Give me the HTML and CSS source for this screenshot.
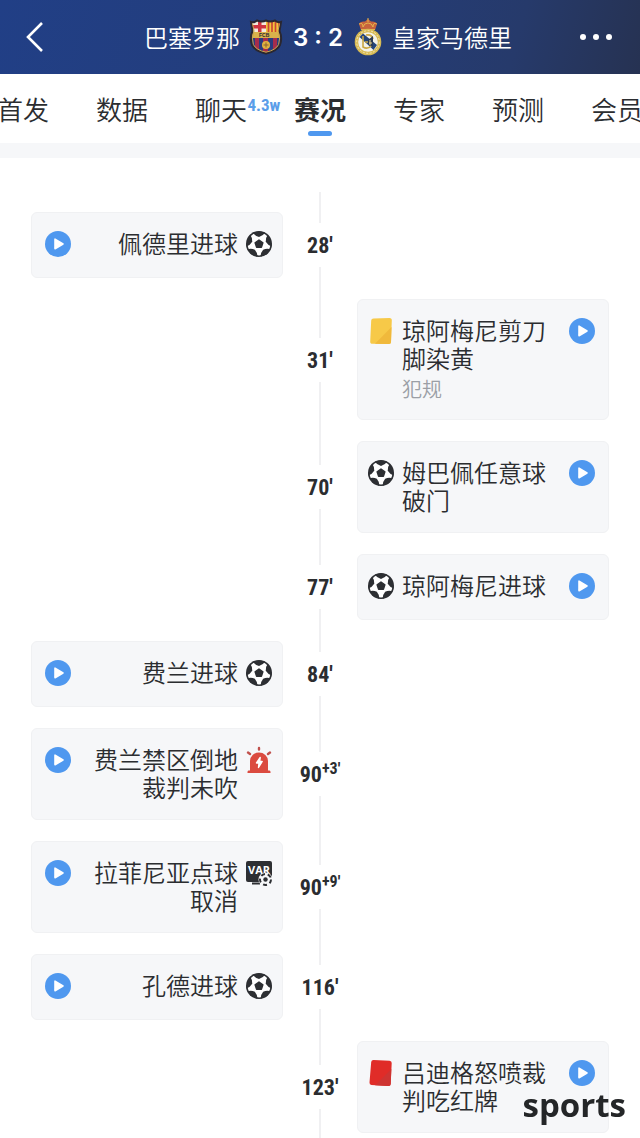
FILE: index.html
```html
<!DOCTYPE html>
<html lang="zh-CN">

<head>
    <meta charset="UTF-8">
    <meta name="viewport" content="width=device-width, initial-scale=1.0">
    <title>赛况</title>
    <link rel="stylesheet" href="styles.css">
</head>

<body>
    <!-- 公用图标 -->
    <svg class="icon_defs" width="0" height="0">
        <symbol id="play" viewBox="0 0 26 26">
            <circle cx="13" cy="13" r="13" fill="#4f98ef" />
            <path d="M10 8.2v9.6l8-4.8z" fill="#fff" stroke="#fff" stroke-width="1.6" stroke-linejoin="round" />
        </symbol>
        <symbol id="ball" viewBox="0 0 26 26">
            <circle cx="13" cy="13" r="13" fill="#2d2f33" />
            <circle cx="13" cy="13" r="11.4" fill="#fff" />
            <g fill="#2d2f33">
                <path id="patch" d="M6.6 1.6Q9 5 13 5.900Q17 5 19.400 1.600L13 .6z" />
                <use href="#patch" transform="rotate(72 13 13)" />
                <use href="#patch" transform="rotate(144 13 13)" />
                <use href="#patch" transform="rotate(216 13 13)" />
                <use href="#patch" transform="rotate(288 13 13)" />
                <path d="M13 9l3.9 2.8-1.5 4.6h-4.8l-1.5-4.6z" stroke="#2d2f33" stroke-width="1.400" stroke-linejoin="round" />
            </g>
        </symbol>
        <symbol id="yellow" viewBox="0 0 26 26">
            <path d="M5.5.5 21.500 0Q24 0 23.800 2.500L23 24Q23 26.200 20.500 26L4.500 25.800Q2 25.800 2.200 23.500L3.200 2.500Q3.300.6 5.500.5z" fill="#f7c948" />
            <path d="M23.500 9 7 25.800l13.500.2Q23 26.200 23 24z" fill="#f0b93c" />
        </symbol>
        <symbol id="red" viewBox="0 0 26 26">
            <path d="M5.500 0 21.500.8Q23.800 1 23.700 3L22.700 24Q22.500 26.200 20.300 26L3.500 25Q1.300 24.800 1.500 22.500L3.200 2Q3.400 0 5.500 0z" fill="#e02c28" />
            <path d="M23.300 9 7 25.200l13.300.8Q22.500 26.200 22.700 24z" fill="#ce3432" />
        </symbol>
        <symbol id="alarm" viewBox="0 0 26 26">
            <path d="M2.500 23.500h1.500V14a9 8.500 0 0 1 18 0v9.500h1.500Q24.500 23.500 24.500 25v1h-23v-1Q1.500 23.500 2.500 23.500z" fill="#db4b40" />
            <path d="M14.200 10.500 10.500 16h2.500l-.5 4.500 3.700-6h-2.500z" fill="#fff" stroke="#fff" stroke-width="1.400" stroke-linejoin="round" />
            <path d="M13 1v1.600M2 5.600l2 1.400M24 5.600l-2 1.400" stroke="#c0504c" stroke-width="2.400" stroke-linecap="round" />
        </symbol>
    </svg>

    <!-- 头部比分 -->
    <header class="header">
        <button class="header_back" type="button" aria-label="返回">
            <svg width="17" height="32" viewBox="0 0 17 32"><path d="M16 2 2 16l14 14" fill="none" stroke="#fff" stroke-width="2.600" /></svg>
        </button>
        <div class="match">
            <span>巴塞罗那</span>
            <svg class="crest_home" viewBox="0 0 34 36">
                <clipPath id="shield"><path d="M2 3Q5 4 8 1.500 13 3.500 17 1.500 21 3.500 26 1.500 29 4 32 3L30.500 12Q33.500 19 31 26 28 32 17 34.500 6 32 3 26 .5 19 3.500 12z" /></clipPath>
                <g clip-path="url(#shield)">
                    <path d="M0 0h34v36H0z" fill="#293c7f" />
                    <path d="M0 0h17v14H0z" fill="#f3e9dc" />
                    <path d="M9 0h3.500v14H9zM2 6h15v3.500H2z" fill="#cf3440" />
                    <path d="M17 0h17v14H17z" fill="#f2c33c" />
                    <path d="M19.500 0v14M23 0v14M26.500 0v14M30 0v14" stroke="#c94636" stroke-width="1.700" />
                    <path d="M6 18h4v16H6zM14 18h5v18h-5zM24 18h4v16h-4z" fill="#a62c4c" />
                    <path d="M0 13h34v6H0z" fill="#d9b24b" />
                    <circle cx="17" cy="26" r="4" fill="#e0b23e" />
                    <path d="M14.500 26h5M17 23.500v5" stroke="#8c6230" />
                </g>
                <text x="10" y="18" class="crest_text">FCB</text>
                <path d="M2 3Q5 4 8 1.500 13 3.500 17 1.500 21 3.500 26 1.500 29 4 32 3L30.500 12Q33.500 19 31 26 28 32 17 34.500 6 32 3 26 .5 19 3.500 12z" fill="none" stroke="#2a2730" stroke-width="2" />
                <path d="M3.500 4.500 5 12Q2 19 4.400 25.500 7 31 17 33.200 27 31 29.600 25.500 32 19 29 12L30.500 4.500" fill="none" stroke="#c9a44a" />
            </svg>
            <strong class="score">3 : 2</strong>
            <svg class="crest_away" viewBox="0 0 30 38">
                <path d="M8 12 6 6Q7 3 12 3.500L15 1l3 2.500Q23 3 24 6l-2 6z" fill="#c7633d" />
                <path d="M15 0v4M6 6q4-2 4 3 1-4 5-4t5 4q0-5 4-3M8 11.500h14" fill="none" stroke="#e3b34c" />
                <circle cx="15" cy="24" r="13.300" fill="#d8bb55" />
                <circle cx="15" cy="24" r="11.300" fill="none" stroke="#f3e6b4" stroke-dasharray="2 1.500" />
                <circle cx="15" cy="24" r="9.800" fill="#f3f2ea" />
                <path d="M6.500 19 10 15.500 24 27l-3.500 5z" fill="#24457b" />
                <path d="M10 18v11q5 3 9-2M12 24h7M13 17q6-1 7 4" fill="none" stroke="#c9a644" stroke-width="1.600" />
                <path d="m15 22 5-4v11l-5-3z" fill="#2b3b55" />
                <path d="M16 25h3M17 22v5" stroke="#ead58a" />
            </svg>
            <span>皇家马德里</span>
        </div>
        <button class="header_more" type="button" aria-label="更多">
            <svg width="32" height="8" viewBox="0 0 32 8" fill="#fff"><circle cx="3" cy="4" r="3" /><circle cx="16" cy="4" r="3" /><circle cx="29" cy="4" r="3" /></svg>
        </button>
    </header>

    <!-- 导航 -->
    <nav class="tabs">
        <a href="#">首发</a>
        <a href="#">数据</a>
        <a href="#">聊天<em class="tab_count">4.3w</em></a>
        <a href="#" class="active">赛况</a>
        <a href="#">专家</a>
        <a href="#">预测</a>
        <a href="#">会员</a>
    </nav>

    <!-- 赛况时间轴 -->
    <main class="timeline">
        <ul class="events">
            <li class="home">
                <div class="card">
                    <button class="play" type="button" aria-label="播放"><svg><use href="#play" /></svg></button>
                    <p>佩德里进球</p>
                    <svg class="icon"><use href="#ball" /></svg>
                </div>
                <time>28′</time>
            </li>
            <li class="away">
                <time>31′</time>
                <div class="card">
                    <svg class="icon"><use href="#yellow" /></svg>
                    <p>琼阿梅尼剪刀脚染黄<small>犯规</small></p>
                    <button class="play" type="button" aria-label="播放"><svg><use href="#play" /></svg></button>
                </div>
            </li>
            <li class="away">
                <time>70′</time>
                <div class="card">
                    <svg class="icon"><use href="#ball" /></svg>
                    <p>姆巴佩任意球破门</p>
                    <button class="play" type="button" aria-label="播放"><svg><use href="#play" /></svg></button>
                </div>
            </li>
            <li class="away">
                <time>77′</time>
                <div class="card">
                    <svg class="icon"><use href="#ball" /></svg>
                    <p>琼阿梅尼进球</p>
                    <button class="play" type="button" aria-label="播放"><svg><use href="#play" /></svg></button>
                </div>
            </li>
            <li class="home">
                <div class="card">
                    <button class="play" type="button" aria-label="播放"><svg><use href="#play" /></svg></button>
                    <p>费兰进球</p>
                    <svg class="icon"><use href="#ball" /></svg>
                </div>
                <time>84′</time>
            </li>
            <li class="home">
                <div class="card">
                    <button class="play" type="button" aria-label="播放"><svg><use href="#play" /></svg></button>
                    <p>费兰禁区倒地裁判未吹</p>
                    <svg class="icon"><use href="#alarm" /></svg>
                </div>
                <time>90<sup>+3′</sup></time>
            </li>
            <li class="home">
                <div class="card">
                    <button class="play" type="button" aria-label="播放"><svg><use href="#play" /></svg></button>
                    <p>拉菲尼亚点球取消</p>
                    <svg class="icon" viewBox="0 0 26 26">
                        <rect x="0" y="1" width="26" height="21" rx="2" fill="#2d2f33" />
                        <path d="M6 23.500h8" stroke="#2d2f33" stroke-width="2" />
                        <text x="2" y="14" class="var_text">VAR</text>
                        <circle cx="19.500" cy="19.500" r="7" fill="#f6f7f9" />
                        <circle cx="19.500" cy="19.500" r="5.500" fill="none" stroke="#2d2f33" stroke-width="2" stroke-dasharray="4 2.900" />
                        <circle cx="19.500" cy="19.500" r="2.200" fill="#2d2f33" />
                    </svg>
                </div>
                <time>90<sup>+9′</sup></time>
            </li>
            <li class="home">
                <div class="card">
                    <button class="play" type="button" aria-label="播放"><svg><use href="#play" /></svg></button>
                    <p>孔德进球</p>
                    <svg class="icon"><use href="#ball" /></svg>
                </div>
                <time>116′</time>
            </li>
            <li class="away">
                <time>123′</time>
                <div class="card">
                    <svg class="icon"><use href="#red" /></svg>
                    <p>吕迪格怒喷裁判吃红牌</p>
                    <button class="play" type="button" aria-label="播放"><svg><use href="#play" /></svg></button>
                </div>
            </li>
        </ul>
    </main>
    <div class="watermark">sports</div>
</body>

</html>
```

FILE: styles.css
```css
* {
    padding: 0;
    margin: 0;
    box-sizing: border-box;
    list-style: none;
    text-decoration: none;
}

body {
    background: #fff;
    color: #2b2d30;
    font-family: "Noto Sans CJK SC", sans-serif;
    font-weight: 350;
    overflow-x: hidden;
}

button {
    border: none;
    background: none;
    cursor: pointer;
}

svg {
    display: block;
}

.icon_defs {
    position: absolute;
}

/* 头部 */
.header {
    height: 74px;
    padding: 0 28px 0 26px;
    display: flex;
    justify-content: space-between;
    align-items: center;
    background: linear-gradient(105deg, #213f86 0%, #243d7a 50%, #263a6b 80%, #263252 100%);
    color: #fff;
}

.header_back {
    width: 50px;
}

.match {
    display: flex;
    align-items: center;
    gap: 9px;
    font-size: 24px;
    line-height: 34px;
    white-space: nowrap;
}

.crest_home {
    width: 34px;
    height: 36px;
}

.crest_away {
    width: 30px;
    height: 38px;
}

.crest_text {
    font: bold 5px "Liberation Sans", sans-serif;
    fill: #2a2730;
}

.score {
    width: 52px;
    padding-top: 2px;
    text-align: center;
    font-family: Inter, sans-serif;
    font-size: 24px;
    font-weight: 600;
}

/* 导航 */
.tabs {
    height: 84px;
    display: flex;
    justify-content: center;
    border-bottom: 15px solid #f6f7f9;
}

.tabs>a {
    position: relative;
    flex: 0 0 99px;
    text-align: center;
    font-size: 26px;
    line-height: 70px;
    color: #2b2d30;
}

.tabs>.active {
    font-weight: 700;
}

.tabs>.active::after {
    content: "";
    position: absolute;
    left: 50%;
    bottom: 7px;
    width: 24px;
    height: 5px;
    margin-left: -12px;
    border-radius: 3px;
    background: #4f98ef;
}

.tab_count {
    position: absolute;
    left: 76px;
    top: 20px;
    font-family: "Liberation Sans Narrow", "Roboto Condensed", Roboto, sans-serif;
    font-size: 17px;
    font-style: normal;
    font-weight: 700;
    line-height: 22px;
    color: #5b9ee9;
}

/* 时间轴 */
.timeline {
    position: relative;
    padding: 54px 31px 6px;
}

.timeline::before {
    content: "";
    position: absolute;
    top: 34px;
    bottom: 0;
    left: 50%;
    width: 2px;
    margin-left: -1px;
    background: #f0f0f2;
}

.events {
    position: relative;
    display: grid;
    gap: 21px;
}

.events>li {
    display: grid;
    grid-template-columns: 1fr 74px 1fr;
    align-items: center;
}

.events time {
    grid-column: 2;
    padding-top: 2px;
    background: #fff;
    text-align: center;
    font-family: "Liberation Sans Narrow", "Roboto Condensed", Roboto, sans-serif;
    font-size: 22px;
    font-weight: 700;
    line-height: 42px;
    white-space: nowrap;
}

.events sup {
    font-size: 16px;
    line-height: 0;
    vertical-align: 8px;
}

.card {
    min-height: 66px;
    padding: 16px 10px 18px 13px;
    display: flex;
    align-items: flex-start;
    gap: 8px;
    border: 1px solid #f0f1f3;
    border-radius: 6px;
    background: #f6f7f9;
}

.away .card {
    padding: 16px 13px 18px 10px;
}

.card p {
    max-width: 146px;
    font-size: 24px;
    line-height: 28px;
}

.card small {
    display: block;
    margin-top: 5px;
    font-size: 20px;
    line-height: 24px;
    color: #9b9fa6;
}

.home p {
    text-align: right;
}

.card .play,
.card .play svg,
.card .icon {
    flex: none;
    width: 26px;
    height: 30px;
}

.home .play {
    margin-right: auto;
}

.away .play {
    margin-left: auto;
}

.var_text {
    font: bold 11px "Open Sans", sans-serif;
    fill: #fff;
}

.watermark {
    position: fixed;
    right: 14px;
    bottom: 11px;
    font-family: "Open Sans", sans-serif;
    font-size: 33px;
    font-weight: 700;
    line-height: 44px;
    color: #242628;
}
```
